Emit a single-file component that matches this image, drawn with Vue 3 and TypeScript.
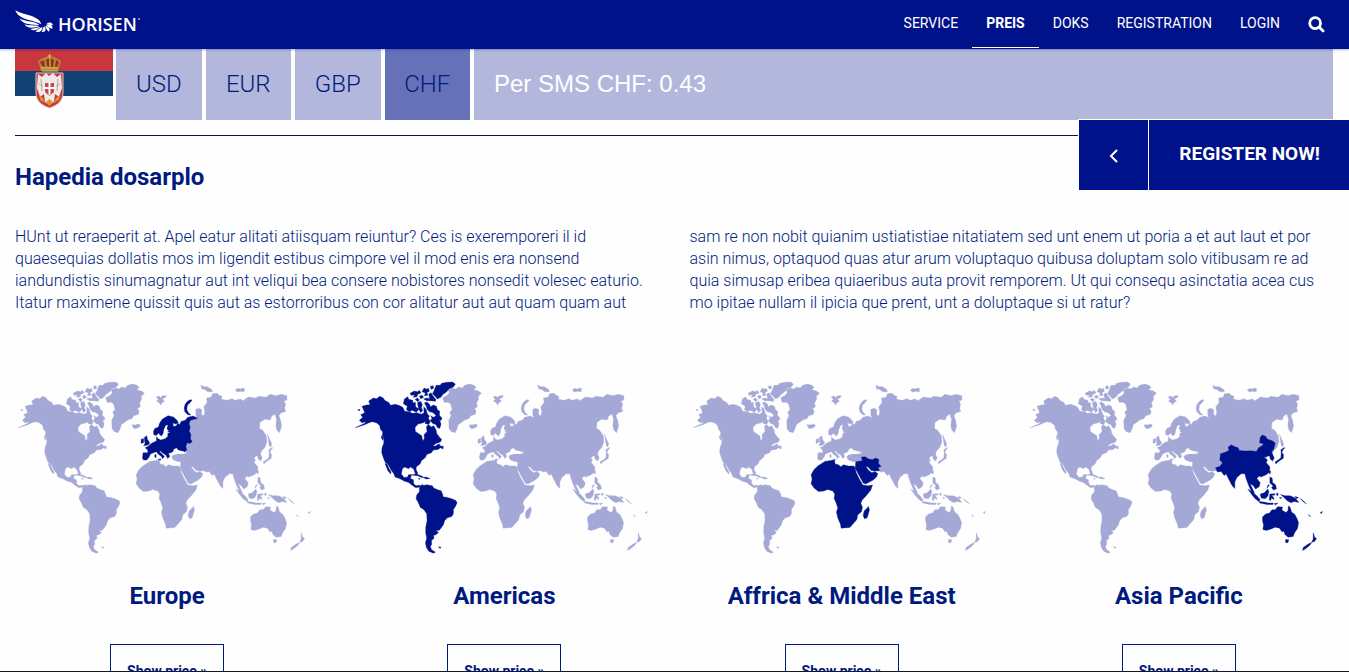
<script setup lang="ts">
import { ref } from 'vue'

interface Land {
  zone: string
  d: string
}

interface Region {
  name: string
  zones: string[]
}

const navItems = ['SERVICE', 'PREIS', 'DOKS', 'REGISTRATION', 'LOGIN']
const currencies = ['USD', 'EUR', 'GBP', 'CHF']
const currency = ref('CHF')

const regions: Region[] = [
  { name: 'Europe', zones: ['europe'] },
  { name: 'Americas', zones: ['americas'] },
  { name: 'Affrica & Middle East', zones: ['africa', 'mideast'] },
  { name: 'Asia Pacific', zones: ['pacific'] },
]

const lands: Land[] = [
  // Mainland North America
  { zone: 'americas', d: 'M24 173L38 166 50 161 56 155 44 158 36 151 46 142 40 134 52 128 48 118 44 109 57 105 68 104 64 93 78 84 88 86 97 79 107 83 112 91 125 98 129 106 144 103 158 107 166 112 172 124 186 125 195 130 208 128 222 133 230 128 229 110 236 118 240 132 246 138 240 150 228 158 212 162 203 172 204 184 214 191 223 197 226 213 231 205 230 194 239 184 237 170 243 163 252 171 259 167 266 180 268 190 275 200 283 208 279 216 266 220 256 228 264 228 275 221 278 227 288 229 287 237 279 233 272 238 258 240 252 248 238 253 234 262 222 272 218 282 207 290 206 298 211 309 208 316 203 309 199 297 189 291 184 296 172 291 165 296 162 312 170 322 181 321 183 314 193 313 189 325 198 329 199 341 206 347 217 345 216 351 205 353 191 343 184 337 170 333 158 326 143 321 139 310 131 300 122 283 113 276 108 263 103 248 104 233 109 220 110 206 105 197 106 186 99 177 97 166 87 158 74 155 63 159 52 164Z' },
  { zone: 'americas', d: 'M113 280L119 282 124 294 131 306 130 312 121 301Z M31 119L38 118 36 123Z M103 196L109 205 107 211 102 204Z' },
  // Caribbean
  { zone: 'americas', d: 'M193 315L205 311 216 315 227 320 224 323 211 317Z M226 322L236 321 248 325 237 327Z M213 325L219 326 215 328Z' },
  // Arctic islands
  { zone: 'americas', d: 'M260 62L266 46 278 46 283 40 298 37 315 36 324 42 318 51 305 57 297 66 287 73 281 81 270 87 263 79 255 71Z' },
  { zone: 'americas', d: 'M171 87L181 80 184 88 196 91 197 99 204 97 205 111 215 117 207 127 194 121 187 125 177 119 180 109 168 101Z' },
  { zone: 'americas', d: 'M188 70L201 63 211 65 216 61 221 69 211 73 209 80 197 82 203 75 191 76Z M224 65L230 54 239 58 243 54 246 64 239 67 241 76 231 77 234 69Z M216 78L224 76 229 82 220 86Z M244 73L251 68 255 75 261 83 266 89 264 94 249 92 238 92 229 87 238 84 247 86Z M249 49L257 47 259 55 251 58Z M203 88L211 84 216 90 211 95Z' },
  { zone: 'americas', d: 'M210 98L220 94 225 104 222 113 226 121 220 128 214 118Z M231 99L238 96 246 102 249 110 258 105 267 109 270 119 277 124 276 136 284 145 280 152 276 149 281 162 277 175 270 172 265 163 256 160 248 151 254 146 250 137 258 142 266 137 261 131 254 127 246 125 239 118 236 107Z M235 149L243 145 249 156 243 163 233 160Z' },
  // South America
  { zone: 'americas', d: 'M216 349L225 343 229 346 238 344 255 347 259 354 271 359 281 362 286 373 287 380 300 382 313 386 325 391 329 398 324 409 318 418 318 431 313 439 300 443 292 451 288 464 280 475 275 481 266 480 273 488 265 494 258 496 260 504 252 512 253 522 249 529 252 538 264 546 258 549 244 543 237 532 234 518 238 504 235 489 235 471 239 452 238 431 229 418 219 412 213 398 206 386 208 375 216 365Z M273 530L281 531 278 535Z' },
  // Greenland, Iceland, Svalbard
  { zone: 'north', d: 'M286 83L300 76 306 67 302 61 315 54 325 57 334 51 344 54 352 46 366 42 380 46 386 53 378 59 393 63 402 70 393 78 393 89 387 99 390 110 381 116 386 123 384 133 370 137 364 146 353 149 342 157 333 163 329 176 323 188 311 184 305 175 304 151 311 137 307 126 314 119 310 103 303 97 290 97Z' },
  { zone: 'north', d: 'M365 164L374 165 386 162 390 168 383 173 373 176 368 172Z M437 81L446 78 450 83 457 77 468 77 464 83 455 86 462 94 454 98 451 105 445 97 438 94 444 88Z M571 45L580 50 590 50 603 58 606 65 592 65 582 58 574 57Z M674 60L683 55 689 58 695 54 704 57 700 60 702 65 690 64 681 66Z' },
  // Northern and central Asia
  { zone: 'asia', d: 'M536 149L560 146 556 134 556 118 565 115 574 119 573 132 579 139 583 127 580 111 590 97 588 84 602 82 606 71 620 70 626 76 634 79 633 88 650 91 665 86 673 91 690 87 697 92 714 81 735 84 745 79 767 82 778 73 796 77 812 73 829 77 829 90 820 93 825 102 822 116 826 124 811 129 805 137 810 151 813 168 807 188 799 180 796 166 798 148 793 132 783 139 779 150 762 148 748 157 747 175 757 181 767 197 769 215 763 232 754 241 747 256 735 258 728 270 670 270 640 262 616 280 600 283 596 296 584 300 578 286 560 278 545 272 528 268 528 250 525 240 522 229 526 218 535 217 540 212 536 206 536 194 532 184 534 172 531 160Z M489 255L500 251 516 252 527 250 532 262 531 274 514 276 501 274 488 269 484 260Z' },
  // Europe
  { zone: 'europe', d: 'M429 184L433 175 444 171 447 160 455 148 466 141 473 137 489 141 501 152 503 158 496 162 487 159 489 169 497 168 502 159 507 164 512 154 524 151 532 142 548 138 562 145 540 151 536 160 539 172 536 184 541 192 540 207 545 214 539 220 530 218 526 229 529 240 522 246 512 242 502 240 499 234 493 235 489 244 482 247 474 250 478 259 472 265 466 255 456 249 450 243 447 245 456 253 462 259 456 266 453 259 443 252 438 245 429 248 420 252 416 261 409 270 399 270 396 264 398 248 412 248 412 240 404 233 413 229 420 222 428 217 438 213 438 200 443 206 451 210 464 206 472 199 472 190 480 186 469 185 465 178 471 166 465 168 460 178 458 190 453 198 448 194 445 189 437 196 430 194Z' },
  { zone: 'europe', d: 'M402 202L409 197 411 208 418 218 413 225 400 227 404 219 402 211Z M392 208L399 205 400 217 392 220Z M539 89L545 90 538 99 531 105 529 119 534 128 541 135 532 134 523 125 521 114 524 103 531 94Z M442 267L452 267 449 271Z M433 254L437 253 437 263 433 261Z' },
  // Middle East
  { zone: 'mideast', d: 'M511 275L530 272 528 261 539 260 548 266 560 269 571 264 580 268 579 280 586 288 584 302 568 303 557 301 548 291 541 289 550 301 559 308 568 304 577 311 573 321 563 330 541 342 533 339 525 324 516 307 509 294Z' },
  // Africa
  { zone: 'africa', d: 'M398 287L409 280 418 274 436 271 447 269 449 282 459 284 466 290 474 284 489 288 505 288 509 294 512 307 520 324 532 345 547 347 561 345 556 360 543 376 530 390 526 400 531 411 528 425 517 434 514 448 503 461 493 472 467 474 465 462 457 444 453 426 457 413 451 396 446 385 448 372 442 363 427 358 415 363 399 364 386 354 377 341 380 327 377 314 386 298Z M549 409L552 420 545 443 537 446 533 436 536 423Z' },
  // South and East Asia
  { zone: 'pacific', d: 'M579 293L592 289 600 278 592 270 594 251 610 246 619 241 617 231 627 224 635 229 647 233 650 241 669 243 685 242 702 244 708 233 718 228 723 221 711 218 713 202 719 195 730 199 734 207 749 212 758 219 754 237 747 246 755 264 750 273 743 267 741 257 732 259 724 263 735 269 731 277 742 291 741 306 731 314 715 321 710 318 703 325 713 338 710 350 699 357 692 346 683 341 689 354 696 369 689 367 681 352 675 337 670 323 667 311 656 311 643 322 637 336 637 355 629 347 619 328 611 312 605 316 596 304 585 306Z' },
  { zone: 'pacific', d: 'M787 233L780 241 778 247 783 253 782 265 774 270 764 277 760 282 758 275 767 270 775 263 776 250 775 239 784 233Z M740 302L744 303 743 312 739 309Z M742 321L749 324 750 337 759 344 762 356 753 360 747 352 752 348 742 338Z M741 344L733 355 736 345Z' },
  { zone: 'asia', d: 'M771 193L776 205 783 220 781 231 776 226 774 212Z' },
  // Indonesia and Papua
  { zone: 'pacific', d: 'M676 357L688 364 703 377 713 389 709 394 698 386 688 374Z M709 394L724 396 738 399 752 399 751 403 733 403 712 399Z M713 372L725 368 736 357 739 364 736 378 728 386 716 384Z M742 372L758 371 756 375 747 376 754 382 753 389 747 383 744 392 740 389Z M763 369L767 370 766 377 762 375Z M755 400L766 399 758 405Z M770 383L777 382 776 386Z M774 373L787 377 803 377 818 384 829 397 815 394 805 398 793 391 786 384Z M817 379L828 382 822 386Z M833 385L843 393 852 402 841 394Z' },
  // Australia, Tasmania, New Zealand, Pacific islands
  { zone: 'pacific', d: 'M720 441L729 432 741 429 748 419 758 419 765 410 780 411 778 420 790 427 796 422 798 407 803 412 807 426 817 433 824 447 828 458 825 475 816 488 812 499 797 501 787 493 784 483 778 485 771 474 758 471 744 477 731 481 721 478 723 464 720 452Z M789 508L799 509 796 518 789 517Z M872 488L877 502 882 505 876 514 868 516 872 505Z M868 516L862 525 849 536 840 541 842 532 856 522Z M893 427L900 424 896 431Z M858 433L864 440 860 438Z' },
]

const seas = 'M466 166L472 165 469 177 475 182 467 188 461 183 463 175Z M489 239L498 235 506 242 520 244 521 250 503 252 488 253Z'
</script>

<template>
  <div class="page">
    <header class="topbar">
      <a class="brand" href="#" aria-label="HORISEN">
        <svg class="wing" viewBox="45 28 117 69" aria-hidden="true">
          <path d="M46 29C63 41 91 41 107 52C117 57 122 63 124 71C103 58 55 59 46 29Z" />
          <path d="M58 53C76 64 105 61 119 74C98 71 70 75 58 53Z" />
          <path d="M73 71C87 77 103 72 118 77C104 81 85 87 73 71Z" />
          <path d="M91 85C103 84 109 80 121 79C115 86 102 94 91 85Z" />
          <path d="M106 92C114 89 117 82 127 79C128 89 118 98 106 92Z" />
          <path d="M125 94C129 88 127 83 133 77C140 86 137 96 125 94Z" />
          <path d="M145 93C142 87 136 83 136 76C148 78 153 88 145 93Z" />
          <path d="M157 84C149 84 143 78 138 74C150 67 160 75 157 84Z" />
          <path d="M159 74C150 74 146 71 138 71C147 62 157 64 159 74Z" />
        </svg>
        <span>HORISEN</span><i class="mark"></i>
      </a>
      <nav class="nav">
        <a v-for="item in navItems" :key="item" href="#" :class="{ active: item === 'PREIS' }">{{ item }}</a>
        <button class="search" type="button" aria-label="Search">
          <svg viewBox="0 0 16 16" aria-hidden="true">
            <circle cx="6.7" cy="6.7" r="5.1" />
            <path d="M10.6 10.6L14.2 14.2" />
          </svg>
        </button>
      </nav>
    </header>

    <main>
      <section class="pricing">
        <svg class="flag" viewBox="0 0 98 71" aria-hidden="true">
          <path fill="#c8363e" d="M0 0H98V23H0Z" />
          <path fill="#104074" d="M0 22H98V47H0Z" />
          <path fill="#c8363c" stroke="#e8c5bd" d="M21 24H48V43C48 52 43 56 34.500 59C26 56 21 52 21 43Z" />
          <path fill="#eeeae9" d="M34 27L38 24 42 28 46 25 47 39 44 48 40 45 39 53 34.500 56 30 53 29 45 25 48 22 39 23 25 27 28 31 24Z" />
          <path fill="#c9444b" d="M30 34H39V43L34.500 47 30 43Z" />
          <path stroke="#fff" stroke-width="2" d="M34.500 33V46M29 39H40" />
          <path fill="#de922c" d="M24 46L28 49 30 54 25 51Z M45 46L41 49 39 54 44 51Z M31 53L34.500 50 38 53 34.500 57Z" />
          <path stroke="#b8a3a1" d="M26 30L27 42M43 30L42 42M24 35L28 37M45 35L41 37" />
          <path fill="#ba862f" d="M26 22L23 12 28 9 34 7 41 9 46 12 43 22Z" />
          <path fill="#8b3428" d="M27 17L25 13 29 11 30 18Z M32 17L31 11 34 9V18Z M36 18V9L39 11 38 18Z M40 18L41 11 44 13 42 18Z" />
          <path stroke="#e0bb55" d="M26 19H43M27 22H43M34.500 5V10M32.500 7H36.500" />
        </svg>
        <div class="currencies">
          <button
            v-for="code in currencies"
            :key="code"
            type="button"
            :class="{ selected: code === currency }"
            :aria-pressed="code === currency"
            @click="currency = code"
          >{{ code }}</button>
        </div>
        <p class="price">Per SMS CHF: 0.43</p>
      </section>

      <hr class="rule" />

      <section class="intro">
        <h1>Hapedia dosarplo</h1>
        <div class="columns">
          <p>
            HUnt ut reraeperit at. Apel eatur alitati atiisquam reiuntur? Ces is exeremporeri il id<br />
            quaesequias dollatis mos im ligendit estibus cimpore vel il mod enis era nonsend<br />
            iandundistis sinumagnatur aut int veliqui bea consere nobistores nonsedit volesec eaturio.<br />
            Itatur maximene quissit quis aut as estorroribus con cor alitatur aut aut quam quam aut
          </p>
          <p>
            sam re non nobit quianim ustiatistiae nitatiatem sed unt enem ut poria a et aut laut et por<br />
            asin nimus, optaquod quas atur arum voluptaquo quibusa doluptam solo vitibusam re ad<br />
            quia simusap eribea quiaeribus auta provit remporem. Ut qui consequ asinctatia acea cus<br />
            mo ipitae nullam il ipicia que prent, unt a doluptaque si ut ratur?
          </p>
        </div>
      </section>

      <section class="regions">
        <article v-for="region in regions" :key="region.name">
          <svg class="map" viewBox="14 0 912 570" aria-hidden="true">
            <path
              v-for="(land, i) in lands"
              :key="i"
              :d="land.d"
              class="land"
              :class="{ lit: region.zones.includes(land.zone) }"
            />
            <path class="sea" :d="seas" />
          </svg>
          <h2>{{ region.name }}</h2>
          <button type="button">Show price »</button>
        </article>
      </section>
    </main>

    <aside class="register">
      <button class="toggle" type="button" aria-label="Collapse">
        <svg viewBox="0 0 10 16" aria-hidden="true"><path d="M8 2L2 8L8 14" /></svg>
      </button>
      <a href="#">REGISTER NOW!</a>
    </aside>
  </div>
</template>

<style>
body {
  margin: 0;
  background: #fefefe;
}
</style>

<style scoped>
.page {
  --navy: #001289;
  position: relative;
  box-sizing: border-box;
  height: 100vh;
  overflow: hidden;
  border-bottom: 1px solid #15152a;
  color: #001a80;
  font-family: Roboto, "Liberation Sans", sans-serif;
}

a {
  color: inherit;
  text-decoration: none;
}

button {
  font-family: inherit;
  color: inherit;
  cursor: pointer;
}

.topbar {
  position: relative;
  display: flex;
  justify-content: space-between;
  height: 49px;
  padding: 0 12px 0 15px;
  background: var(--navy);
  box-shadow: 0 1px 2px rgba(0, 18, 137, 0.3);
  color: #fff;
}

.brand {
  display: flex;
  align-items: center;
  height: 48px;
  font: 600 18px/24px "Open Sans", "Noto Sans", sans-serif;
}

.wing {
  width: 39px;
  height: 23px;
  margin-right: 4px;
  margin-bottom: 6px;
  fill: #fff;
}

.mark {
  width: 2px;
  height: 2px;
  margin: 0 0 10px 1px;
  border-radius: 50%;
  background: #a8aedb;
}

.nav {
  display: flex;
  height: 48px;
  font-size: 14px;
  line-height: 46px;
}

.nav a {
  box-sizing: border-box;
  padding: 0 14px;
  border-bottom: 1px solid transparent;
}

.nav a.active {
  border-color: #fff;
  font-weight: 700;
}

.search {
  display: flex;
  align-items: center;
  padding: 0 12px 0 14px;
  border: 0;
  background: none;
}

.search svg {
  width: 17px;
  height: 17px;
  fill: none;
  stroke: #fff;
  stroke-width: 2.6;
  stroke-linecap: round;
}

.pricing {
  display: flex;
  gap: 4px;
  height: 71px;
  margin: 0 16px 0 15px;
}

.flag {
  width: 98px;
  height: 71px;
  margin-right: -1px;
  fill: none;
}

.currencies {
  display: flex;
  gap: 4px;
  width: 354px;
}

.currencies button {
  flex: 1;
  padding: 0 0 2px;
  border: 0;
  background: #b3b7db;
  font-size: 24px;
  font-weight: 300;
}

.currencies .selected {
  background: #6671b8;
}

.price {
  flex: 1;
  margin: 0;
  padding-left: 20px;
  background: #b3b7db;
  color: #fff;
  font: 24px/70px "Liberation Sans", Arial, sans-serif;
}

.rule {
  margin: 15px 16px 0 15px;
  border: 0;
  border-top: 1px solid #12123c;
}

.intro {
  padding: 0 15px;
}

h1,
h2 {
  margin: 0;
  font-size: 24px;
  line-height: 32px;
  font-weight: 700;
}

h1 {
  padding-top: 25px;
}

.columns {
  display: grid;
  grid-template-columns: 1fr 1fr;
  gap: 30px;
  margin-top: 33px;
  font-size: 16px;
  font-weight: 300;
  line-height: 22px;
  white-space: nowrap;
}

.columns p {
  margin: 0;
}

.regions {
  display: grid;
  grid-template-columns: repeat(4, 1fr);
  margin-top: 56px;
}

.regions article {
  padding: 0 18px 0 15px;
  text-align: center;
}

.map {
  display: block;
  width: 100%;
}

.land {
  fill: #a3a8d6;
  stroke: #a3a8d6;
  stroke-width: 1;
  stroke-linejoin: round;
}

.land.lit {
  fill: var(--navy);
  stroke: var(--navy);
}

.sea {
  fill: #fefefe;
}

h2 {
  padding-top: 20px;
}

.regions button {
  height: 54px;
  margin-top: 32px;
  padding: 0 16px;
  border: 1px solid #001a80;
  background: none;
  font-size: 14px;
  font-weight: 700;
}

.register {
  position: absolute;
  top: 119px;
  right: 0;
  display: flex;
  height: 70px;
  border: solid #fff;
  border-width: 1px 0 0 1px;
  background: var(--navy);
  color: #fff;
}

.toggle {
  display: flex;
  box-sizing: border-box;
  align-items: center;
  justify-content: center;
  width: 70px;
  padding: 2px 0 0;
  border: 0;
  border-right: 1px solid #fff;
  background: none;
}

.toggle svg {
  width: 10px;
  height: 16px;
  fill: none;
  stroke: #fff;
  stroke-width: 2;
}

.register a {
  padding: 0 29px 0 30px;
  font-size: 19px;
  font-weight: 700;
  line-height: 68px;
}
</style>
